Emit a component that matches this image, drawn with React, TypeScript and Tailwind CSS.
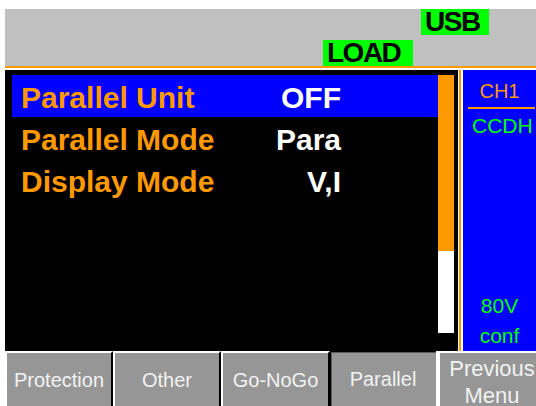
import React from 'react';

const rows = [
  { label: 'Parallel Unit', value: 'OFF', selected: true },
  { label: 'Parallel Mode', value: 'Para', selected: false },
  { label: 'Display Mode', value: 'V,I', selected: false },
];

const keys = [
  { label: 'Protection', width: 'w-[108px]' },
  { label: 'Other', width: 'w-[108px]' },
  { label: 'Go-NoGo', width: 'w-[109px]' },
  { label: 'Parallel', width: 'w-[108px]', pressed: true },
  { label: 'Previous Menu', width: 'w-[108px]', twoLine: true },
];

const App = () => {
  return (
    <div className="w-[536px] h-[406px] overflow-hidden bg-white pt-[9px] pl-[5px] font-['Liberation_Sans',Arial,sans-serif]">
      {/* Status bar */}
      <div className="h-[59px] w-[560px] bg-[#c0c0c0] border-b-2 border-[#ff9900] flex flex-col">
        <div className="pl-[416px]">
          <div className="w-[68px] h-[26px] bg-[#00ff00] pl-[4px] text-[28px] leading-[26px] font-bold tracking-[-1.5px] text-black">
            USB
          </div>
        </div>
        <div className="pl-[318px] mt-[5px]">
          <div className="w-[90px] h-[26px] bg-[#00ff00] pl-[4px] text-[28px] leading-[26px] font-bold tracking-[-1.5px] text-black">
            LOAD
          </div>
        </div>
      </div>

      {/* Main area */}
      <div className="mt-[2px] h-[281px] flex">
        <div className="w-[453px] shrink-0 bg-black flex pl-[7px] pt-[5px]">
          <div className="w-[426px]">
            {rows.map((row) => (
              <div
                key={row.label}
                className={`h-[42px] flex pt-[4px] text-[30px] leading-[38px] font-bold whitespace-nowrap ${
                  row.selected ? 'bg-[#0000ff]' : ''
                }`}
              >
                <span className="w-[250px] pl-[9px] text-[#ff9900]">{row.label}</span>
                <span className="w-[79px] text-right text-white">{row.value}</span>
              </div>
            ))}
          </div>
          <div className="w-[16px] flex flex-col">
            <div className="h-[176px] bg-[#ff9900]" />
            <div className="h-[82px] bg-white" />
          </div>
        </div>
        <div className="ml-[1px] border-l-2 border-[#ff9900] pl-[2px] flex-1 flex">
          <div className="flex-1 bg-[#0000ff] flex flex-col">
            <div className="pt-[9px] text-center text-[20px] leading-[24px] text-[#ff9900]">CH1</div>
            <div className="mt-[4px] ml-[5px] mr-[1px] h-[2px] bg-[#ff9900]" />
            <div className="mt-[5px] pl-[9px] text-[21px] leading-[24px] text-[#00ff00] whitespace-nowrap">CCDH</div>
            <div className="mt-auto text-center text-[21px] leading-[30px] text-[#00ff00]">
              <div>80V</div>
              <div>conf</div>
            </div>
          </div>
        </div>
      </div>

      {/* Soft keys */}
      <div className="flex w-[560px]">
        {keys.map((key) => (
          <div
            key={key.label}
            className={`${key.width} h-[55px] shrink-0 bg-[#969696] flex items-center justify-center text-center text-[#f2f2f2] ${
              key.pressed
                ? 'shadow-[inset_1px_1px_0_#000,inset_2px_2px_0_#5a5a5a] border-r-2 border-white'
                : 'border-t-2 border-l-2 border-r-2 border-t-white border-l-white border-r-black'
            }`}
          >
            {key.twoLine ? (
              <div className="mt-[4px] text-[22px] leading-[27px]">
                Previous
                <br />
                Menu
              </div>
            ) : (
              <span className="text-[20px] leading-[24px]">{key.label}</span>
            )}
          </div>
        ))}
      </div>
    </div>
  );
};

export default App;
